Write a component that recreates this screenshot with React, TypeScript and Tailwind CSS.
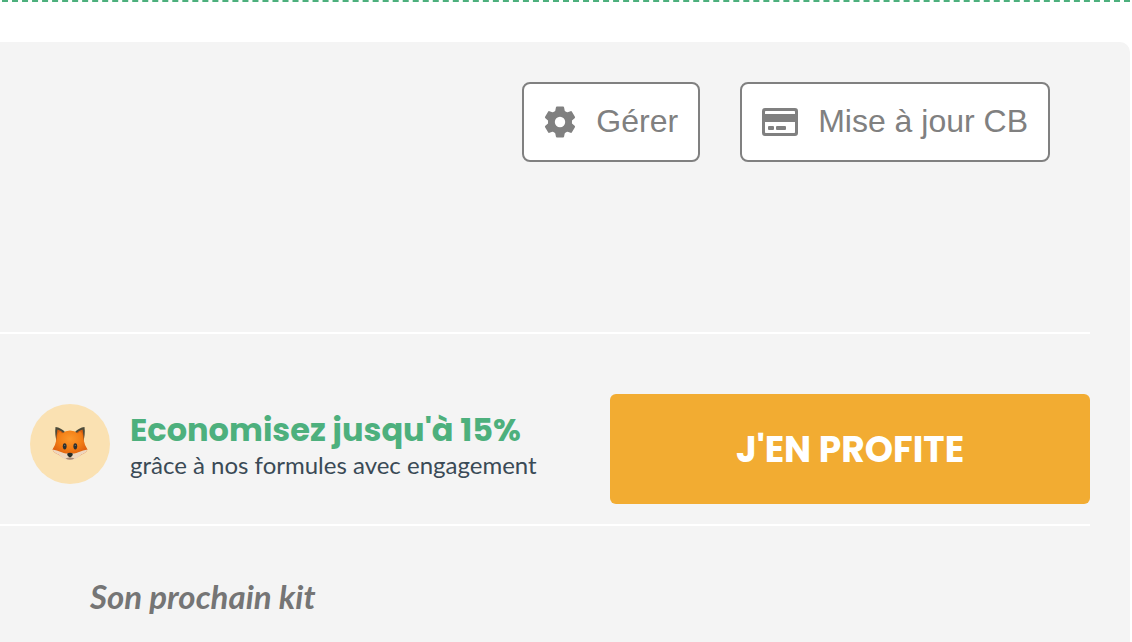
import type { ReactNode } from 'react';

function GearIcon() {
  return (
    <svg viewBox="0 0 32 32" className="w-8 h-8 shrink-0" fill="currentColor" aria-hidden="true">
      <circle cx="16" cy="16" r="12" />
      <path id="tooth" d="M13 .5h6q1 0 1.100 1L21 6v20l-.9 4.500q-.1 1-1.100 1h-6q-1 0-1.100-1L11 26V6l.9-4.500q.1-1 1.100-1z" />
      <use href="#tooth" transform="rotate(60 16 16)" />
      <use href="#tooth" transform="rotate(120 16 16)" />
      <circle cx="16" cy="16" r="5.2" fill="#fff" />
    </svg>
  );
}

function CardIcon() {
  return (
    <svg viewBox="0 0 36 28" className="w-9 h-7 shrink-0" fill="currentColor" aria-hidden="true">
      <path
        fillRule="evenodd"
        d="M3 0h30a3 3 0 0 1 3 3v22a3 3 0 0 1-3 3H3a3 3 0 0 1-3-3V3a3 3 0 0 1 3-3zM3.700 3h28.600q.7 0 .7.700V6H3V3.700q0-.7.7-.7zM3 14h30v10.300q0 .7-.7.700H3.700q-.7 0-.7-.7z"
      />
      <rect x="6" y="18" width="6" height="4" rx="1" />
      <rect x="14" y="18" width="10" height="4" rx="1" />
    </svg>
  );
}

function FoxIcon() {
  return (
    <svg viewBox="0 0 36 36" className="w-9 h-9" role="img" aria-label="Renard">
      <defs>
        <radialGradient id="fur" cx="50%" cy="30%" r="65%">
          <stop offset="0" stopColor="#fc982c" />
          <stop offset="0.5" stopColor="#f37f16" />
          <stop offset="1" stopColor="#d9560c" />
        </radialGradient>
      </defs>
      <path d="M3.500 1Q9 1.500 13.500 6.500L5 17Q2.500 8 3.500 1zM32.500 1Q27 1.500 22.500 6.500L31 17q2.500-9 1.500-16z" fill="#4b4a3a" />
      <path d="M5.500 3.500Q9 4 12.500 8l-8 9Q4 9 5.500 3.500zM30.500 3.500Q27 4 23.500 8l8 9q.5-8-1-13.500z" fill="#d9600f" />
      <path d="M18 4.500q4.500 0 8 3l2-2.200q2 1.200 2.500 3.200l1.300 6q.7 4.500 3.700 9-1.500 3.500-6 5Q24 33 18 33T6.500 28.500Q2 27 .5 23.500q3-4.500 3.700-9l1.300-6q.5-2 2.500-3.200l2 2.200q3.500-3 8-3z" fill="url(#fur)" />
      <path d="M.5 23.500q4.500.5 8.500 2.500t6.500 1.200h5Q23 28 27 26t8.500-2.500q-1.500 3.500-6 5Q24 34 18 34T6.500 28.500Q2 27 .5 23.500z" fill="#eed6be" />
      <path d="M13.500 32.500q4.500-1.800 9 0-4.500 2.500-9 0z" fill="#a88873" />
      <ellipse cx="12.700" cy="20.300" rx="1.900" ry="3.100" fill="#2c3030" />
      <ellipse cx="23.300" cy="20.300" rx="1.900" ry="3.100" fill="#2c3030" />
      <circle cx="12.700" cy="19.300" r=".6" fill="#757b7b" />
      <circle cx="23.300" cy="19.300" r=".6" fill="#757b7b" />
      <path d="M15.200 27.500q2.800-1.400 5.600 0 .4 1.800-1.500 3.200-1.300 1-2.600 0-1.900-1.400-1.500-3.200z" fill="#252b28" />
    </svg>
  );
}

function OutlineButton({ icon, children }: { icon: ReactNode; children: ReactNode }) {
  return (
    <button
      type="button"
      className="flex items-center gap-5 h-20 px-5 bg-white border-2 border-[#808080] rounded-lg text-[#808080] text-[32px] leading-9 font-['Liberation_Sans',sans-serif]"
    >
      {icon}
      <span className="pb-0.5">{children}</span>
    </button>
  );
}

export default function App() {
  return (
    <div className="min-h-screen flex flex-col bg-white font-[Lato,sans-serif]">
      <div className="mx-0.5 border-t-2 border-dashed border-[#4db07d]" />

      <main className="flex-1 mt-10 mr-0.5 pr-10 bg-[#f4f4f4] rounded-tr-[10px]">
        {/* Subscription actions */}
        <div className="flex justify-end gap-10 pt-10 pr-10 pb-[170px]">
          <OutlineButton icon={<GearIcon />}>Gérer</OutlineButton>
          <OutlineButton icon={<CardIcon />}>Mise à jour CB</OutlineButton>
        </div>

        {/* Commitment offer */}
        <section className="flex items-start justify-between pt-[60px] pb-5 pl-[30px] border-y-2 border-white">
          <div className="flex items-center gap-5 pt-2.5">
            <div className="flex items-center justify-center w-20 h-20 shrink-0 rounded-full bg-[#fae1b2]">
              <FoxIcon />
            </div>
            <div className="whitespace-nowrap">
              <h2 className="text-[32px] leading-[42px] font-bold text-[#4db07d] font-[Poppins,Inter,sans-serif]">
                Economisez jusqu'à 15%
              </h2>
              <p className="text-2xl leading-7 text-[#3a4a56]">grâce à nos formules avec engagement</p>
            </div>
          </div>
          <button
            type="button"
            className="w-[480px] h-[110px] pt-0.5 rounded-md bg-[#f2ac32] text-white text-[36px] leading-[44px] font-bold font-[Poppins,Inter,sans-serif]"
          >
            J'EN PROFITE
          </button>
        </section>

        <h3 className="pt-[50px] pl-[90px] text-[33px] leading-10 font-bold italic text-[#757575]">
          Son prochain kit
        </h3>
      </main>
    </div>
  );
}
